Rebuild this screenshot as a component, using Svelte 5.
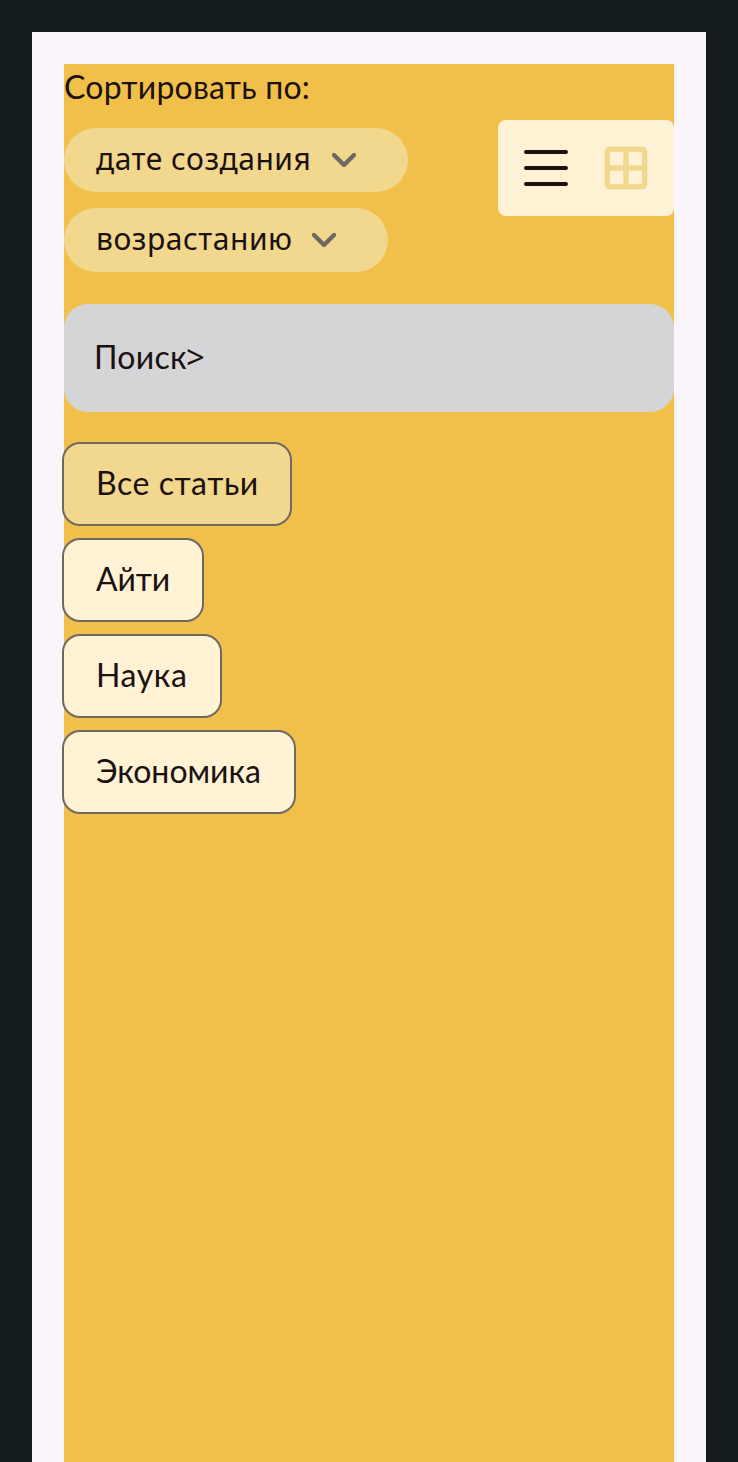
<script>
  const sorts = [
    { label: 'дате создания', width: 344, spacing: 0.5 },
    { label: 'возрастанию', width: 324, spacing: 0.53 }
  ];
  const tabs = [
    { label: 'Все статьи', width: 230, spacing: 0.55 },
    { label: 'Айти', width: 142, spacing: -0.1 },
    { label: 'Наука', width: 160, spacing: 0.6 },
    { label: 'Экономика', width: 234, spacing: 0 }
  ];
  let active = $state(0);
</script>

<main class="page">
  <section class="content">
    <div class="toolbar">
      <div class="sorting">
        <span class="title">Сортировать по:</span>
        {#each sorts as sort}
          <button class="select" style:width="{sort.width}px">
            <span class="value" style:letter-spacing="{sort.spacing}px">{sort.label}</span>
            <svg width="24" height="14" viewBox="0 0 24 14"><path d="M2 2l10 10L22 2" fill="none" stroke="#6f6a60" stroke-width="4.4" stroke-linecap="round" stroke-linejoin="round" /></svg>
          </button>
        {/each}
      </div>
      <div class="views">
        <svg width="44" height="36" viewBox="0 0 44 36"><path d="M2 2h40M2 18h40M2 34h40" stroke="#1b1111" stroke-width="4" stroke-linecap="round" /></svg>
        <svg width="44" height="44" viewBox="0 0 44 44"><rect x="3.3" y="3.3" width="37.4" height="37.4" rx="2.4" fill="none" stroke="#f2d78f" stroke-width="5.4" /><path d="M22 3.5v37M3.5 22h37" stroke="#f2d78f" stroke-width="5.4" /></svg>
      </div>
    </div>
    <div class="search"><span class="query">Поиск<span class="caret">&gt;</span></span></div>
    <div class="tabs">
      {#each tabs as tab, i}
        <button class="tab" class:active={active === i} style:width="{tab.width}px" onclick={() => (active = i)}>
          <span style:letter-spacing="{tab.spacing}px">{tab.label}</span>
        </button>
      {/each}
    </div>
  </section>
</main>

<style>
  :global(body) { background: #141c1e; }
  .page {
    box-sizing: border-box;
    height: 1462px;
    padding: 32px 32px 0;
    font: 32px/48px Lato, "Noto Sans", sans-serif;
    color: #1b1111;
    overflow: hidden;
  }
  .content {
    box-sizing: border-box;
    height: 1430px;
    border: solid #faf5fb;
    border-width: 32px 32px 0;
    background: #f1c04a;
  }
  button {
    box-sizing: border-box;
    margin: 0;
    border: 0;
    color: inherit;
    font: inherit;
    text-align: left;
    white-space: nowrap;
  }
  svg { display: block; flex: none; }
  .toolbar { display: flex; justify-content: space-between; align-items: center; height: 208px; }
  .sorting { display: flex; flex-direction: column; gap: 16px; }
  .title { height: 48px; line-height: 46px; letter-spacing: 0.23px; white-space: nowrap; }
  .select {
    display: flex;
    align-items: center;
    justify-content: space-between;
    height: 64px;
    padding: 0 52px 0 32px;
    border-radius: 32px;
    background: #f2d78f;
    font-family: "Noto Sans", sans-serif;
    font-size: 30px;
  }
  .value { padding-bottom: 2px; }
  .views {
    box-sizing: border-box;
    display: flex;
    align-items: center;
    justify-content: space-between;
    width: 176px;
    height: 96px;
    padding: 0 26px;
    border-radius: 8px;
    background: #fff2d5;
  }
  .search {
    box-sizing: border-box;
    display: flex;
    align-items: center;
    height: 108px;
    margin-top: 32px;
    padding: 0 0 2px 30px;
    border-radius: 24px;
    background: #d5d5d7;
  }
  .query { display: flex; letter-spacing: 0.3px; }
  .caret { margin-left: -1px; font-family: "Noto Sans", sans-serif; font-size: 33px; }
  .tabs { display: flex; flex-direction: column; align-items: flex-start; gap: 12px; margin: 30px 0 0 -2px; }
  .tab { height: 84px; padding: 0 0 2px 32px; border: 2px solid #6f6a60; border-radius: 18px; background: #fff2d5; }
  .tab.active { background: #f2d78f; }
</style>
